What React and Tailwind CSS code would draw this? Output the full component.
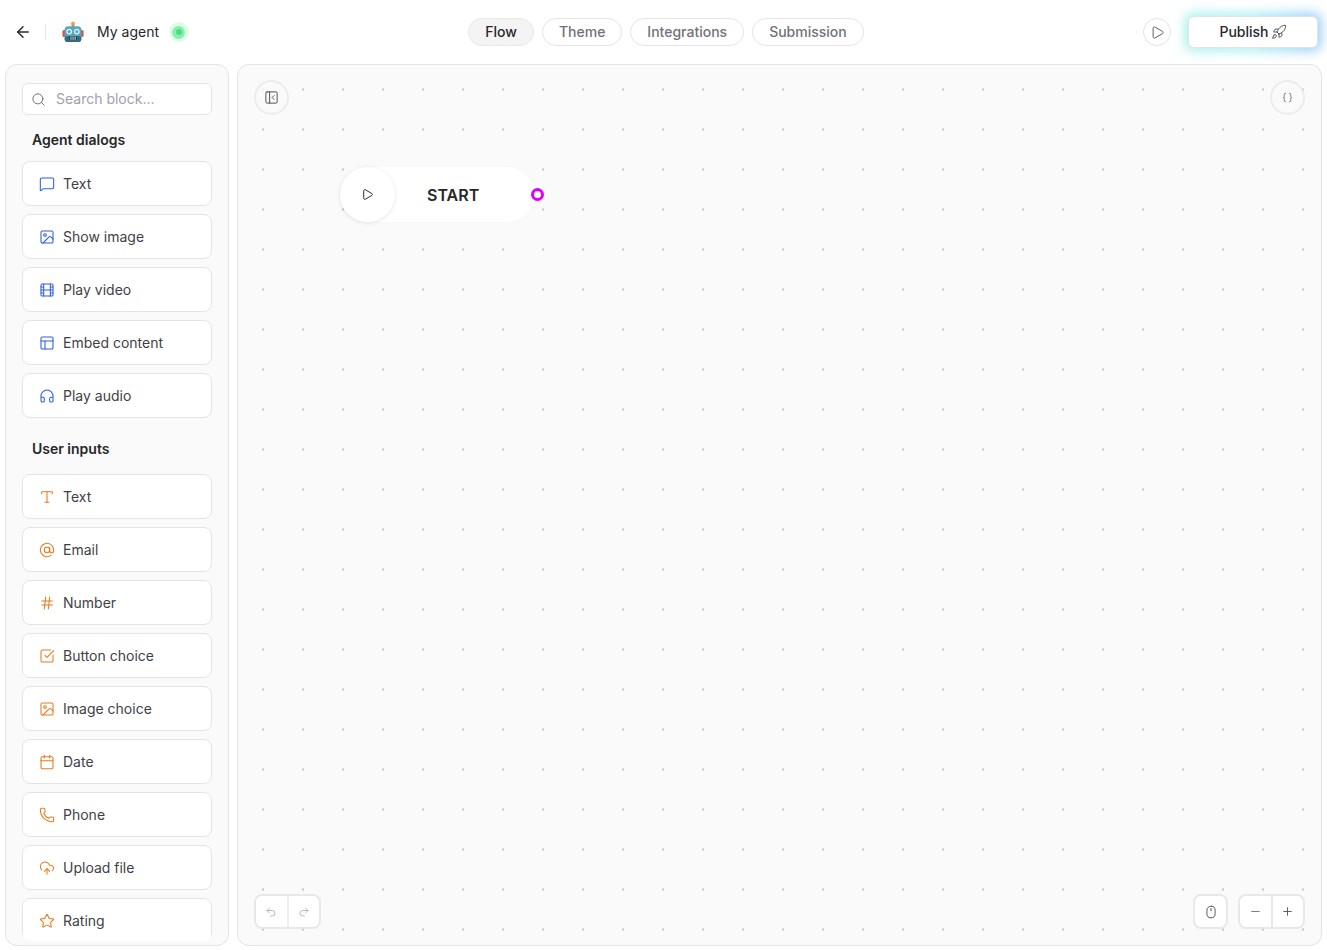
import React from "react";
import {
  ArrowLeft, AtSign, Braces, Calendar, CloudUpload, Film, Hash, Headphones, Image, MessageSquare, Minus, Mouse,
  PanelLeftClose, PanelsTopLeft, Phone, Play, Plus, Redo2, Rocket, Search, SquareCheckBig, Star, Type, Undo2,
} from "lucide-react";

const dialogs = [
  ["Text", MessageSquare],
  ["Show image", Image],
  ["Play video", Film],
  ["Embed content", PanelsTopLeft],
  ["Play audio", Headphones],
];
const inputs = [
  ["Text", Type],
  ["Email", AtSign],
  ["Number", Hash],
  ["Button choice", SquareCheckBig],
  ["Image choice", Image],
  ["Date", Calendar],
  ["Phone", Phone],
  ["Upload file", CloudUpload],
  ["Rating", Star],
];

function RobotEmoji() {
  return (
    <svg width="22" height="22" viewBox="0 0 22 22" className="shrink-0">
      <circle cx="11" cy="2.6" r="2" fill="#f7a531" />
      <rect x="9.6" y="3.5" width="2.8" height="3" fill="#8f9ea6" />
      <rect x="0.4" y="9" width="4" height="7" rx="1.6" fill="#d9534f" />
      <rect x="17.6" y="9" width="4" height="7" rx="1.6" fill="#d9534f" />
      <rect x="2.6" y="5.2" width="16.8" height="15.8" rx="3.6" fill="#5fa3b8" />
      <rect x="2.6" y="15" width="16.8" height="6" rx="3" fill="#2f6f86" />
      <circle cx="7.2" cy="10.6" r="2.9" fill="#d8f3fb" />
      <circle cx="14.8" cy="10.6" r="2.9" fill="#d8f3fb" />
      <circle cx="7.2" cy="10.6" r="1.6" fill="#38b6dc" />
      <circle cx="14.8" cy="10.6" r="1.6" fill="#38b6dc" />
      <rect x="7" y="15.6" width="8" height="3.2" rx="0.8" fill="#22333b" />
      <rect x="8.4" y="15.6" width="1.1" height="3.2" fill="#c9d6db" />
      <rect x="10.5" y="15.6" width="1.1" height="3.2" fill="#c9d6db" />
      <rect x="12.6" y="15.6" width="1.1" height="3.2" fill="#c9d6db" />
    </svg>
  );
}

function Block({ label, Icon, color }) {
  return (
    <div className="flex h-[45px] shrink-0 items-center gap-2 rounded-lg border border-[#e4e4e7] bg-white pl-4 text-sm text-[#3f3f46]">
      <Icon size={16} strokeWidth={1.6} className={color} />
      <span>{label}</span>
    </div>
  );
}

function Tab({ label, active }) {
  return (
    <div
      className={
        active
          ? "flex h-7 items-center rounded-full border border-[#e8e8e8] bg-[#f4f4f5] px-4 text-sm font-medium text-[#27272a]"
          : "flex h-7 items-center rounded-full border border-[#e4e4e7] bg-white px-4 text-sm font-medium text-[#71717a]"
      }
    >
      {label}
    </div>
  );
}

export default function App() {
  return (
    <div className="flex h-[950px] w-full flex-col overflow-hidden bg-white font-['Inter',sans-serif] text-[#27272a]">
      <header className="flex h-16 shrink-0 items-center pl-[14px] pr-[9px]">
        <div className="flex flex-1 items-center">
          <ArrowLeft size={18} strokeWidth={1.9} className="text-[#27272a]" />
          <div className="ml-[13px] mr-4 h-4 w-px bg-[#e4e4e7]" />
          <RobotEmoji />
          <span className="ml-[13px] text-sm text-[#27272a]">My agent</span>
          <div className="ml-[10px] flex h-5 w-5 items-center justify-center rounded-full bg-[#dcfce7]">
            <div className="flex h-[13px] w-[13px] items-center justify-center rounded-full bg-[#86efac]">
              <div className="h-[6px] w-[6px] rounded-full bg-[#4ade80]" />
            </div>
          </div>
        </div>
        <nav className="flex items-center gap-2">
          <Tab label="Flow" active />
          <Tab label="Theme" />
          <Tab label="Integrations" />
          <Tab label="Submission" />
        </nav>
        <div className="flex flex-1 items-center justify-end">
          <div className="flex h-7 w-7 items-center justify-center rounded-full border border-[#e4e4e7] bg-white">
            <Play size={15} strokeWidth={1.5} className="text-[#52525b]" />
          </div>
          <div className="relative ml-[17px]">
            <div className="absolute -inset-[3px] rounded-lg bg-gradient-to-r from-[#a5f0ea] via-[#a8eef0] to-[#93c9fa] blur-[6px]" />
            <div className="relative flex h-8 w-[130px] items-center justify-center gap-[2px] rounded-md border border-[#e4e4e7] bg-white text-sm font-medium text-[#27272a]">
              Publish
              <Rocket size={16} strokeWidth={1.5} className="text-[#52525b]" />
            </div>
          </div>
        </div>
      </header>

      <main className="flex min-h-0 flex-1 gap-2 pb-1 pl-[5px] pr-[5px]">
        <aside className="flex w-[224px] shrink-0 flex-col rounded-xl border border-[#e4e4e7] bg-[#fafafa] px-4 pb-1 pt-[18px]">
          <div className="flex min-h-0 flex-1 flex-col overflow-hidden rounded-b-lg">
            <div className="flex h-8 shrink-0 items-center gap-2 rounded-md border border-[#e4e4e7] bg-white px-2 text-sm text-[#a1a1aa]">
              <Search size={15} strokeWidth={1.6} className="text-[#71717a]" />
              <span className="ml-[2px]">Search block...</span>
            </div>
            <h2 className="mb-[11px] ml-[10px] mt-[15px] text-sm font-semibold leading-5 text-[#27272a]">Agent dialogs</h2>
            <div className="flex flex-col gap-2">
              {dialogs.map(([label, Icon]) => (
                <Block key={label} label={label} Icon={Icon} color="text-[#2f5fe0]" />
              ))}
            </div>
            <h2 className="mb-[15px] ml-[10px] mt-[21px] text-sm font-semibold leading-5 text-[#27272a]">User inputs</h2>
            <div className="flex flex-col gap-2">
              {inputs.map(([label, Icon]) => (
                <Block key={label} label={label} Icon={Icon} color="text-[#ea7a1e]" />
              ))}
            </div>
          </div>
        </aside>

        <section className="relative min-w-0 flex-1 overflow-hidden rounded-xl border border-[#e4e4e7] bg-[#fafafa] bg-[radial-gradient(circle,#c4c4c4_1px,transparent_1.2px)] bg-[position:5px_4.5px] bg-[size:40px_40px]">
          <div className="absolute left-4 top-[15px] flex h-[35px] w-[35px] items-center justify-center rounded-full border-2 border-[#ececec] bg-[#fafafa]/80">
            <PanelLeftClose size={15} strokeWidth={1.6} className="text-[#52525b]" />
          </div>
          <div className="absolute right-4 top-[15px] flex h-[35px] w-[35px] items-center justify-center rounded-full border-2 border-[#ececec] bg-[#fafafa]/80">
            <Braces size={11} strokeWidth={1.5} className="text-[#52525b]" />
          </div>

          <div className="absolute left-[102px] top-[102px] flex h-[55px] w-[195px] items-center rounded-full bg-white shadow-[0_0_2px_rgba(0,0,0,0.04)]">
            <div className="flex h-[55px] w-[55px] shrink-0 items-center justify-center rounded-full bg-white shadow-[0_1px_4px_rgba(0,0,0,0.1)]">
              <Play size={13} strokeWidth={1.8} className="text-[#27272a]" />
            </div>
            <span className="ml-[32px] text-base font-semibold text-[#27272a]">START</span>
            <div className="absolute left-[191px] top-[21px] h-[13px] w-[13px] rounded-full border-[3px] border-[#d900ff] bg-white" />
          </div>

          <div className="absolute bottom-4 left-4 flex h-[35px] w-[67px] rounded-lg border-2 border-[#e8e8e8] bg-white">
            <div className="flex flex-1 items-center justify-center border-r-2 border-[#eeeeee]">
              <Undo2 size={12} strokeWidth={1.5} className="text-[#a1a1aa]" />
            </div>
            <div className="flex flex-1 items-center justify-center">
              <Redo2 size={12} strokeWidth={1.5} className="text-[#a1a1aa]" />
            </div>
          </div>
          <div className="absolute bottom-4 right-4 flex gap-[10px]">
            <div className="flex h-[35px] w-[35px] items-center justify-center rounded-lg border-2 border-[#e8e8e8] bg-white">
              <Mouse size={14} strokeWidth={1.5} className="text-[#3f3f46]" />
            </div>
            <div className="flex h-[35px] w-[67px] rounded-lg border-2 border-[#e8e8e8] bg-white">
              <div className="flex flex-1 items-center justify-center border-r-2 border-[#e8e8e8]">
                <Minus size={13} strokeWidth={1.7} className="text-[#71717a]" />
              </div>
              <div className="flex flex-1 items-center justify-center">
                <Plus size={13} strokeWidth={1.7} className="text-[#52525b]" />
              </div>
            </div>
          </div>
        </section>
      </main>
    </div>
  );
}
